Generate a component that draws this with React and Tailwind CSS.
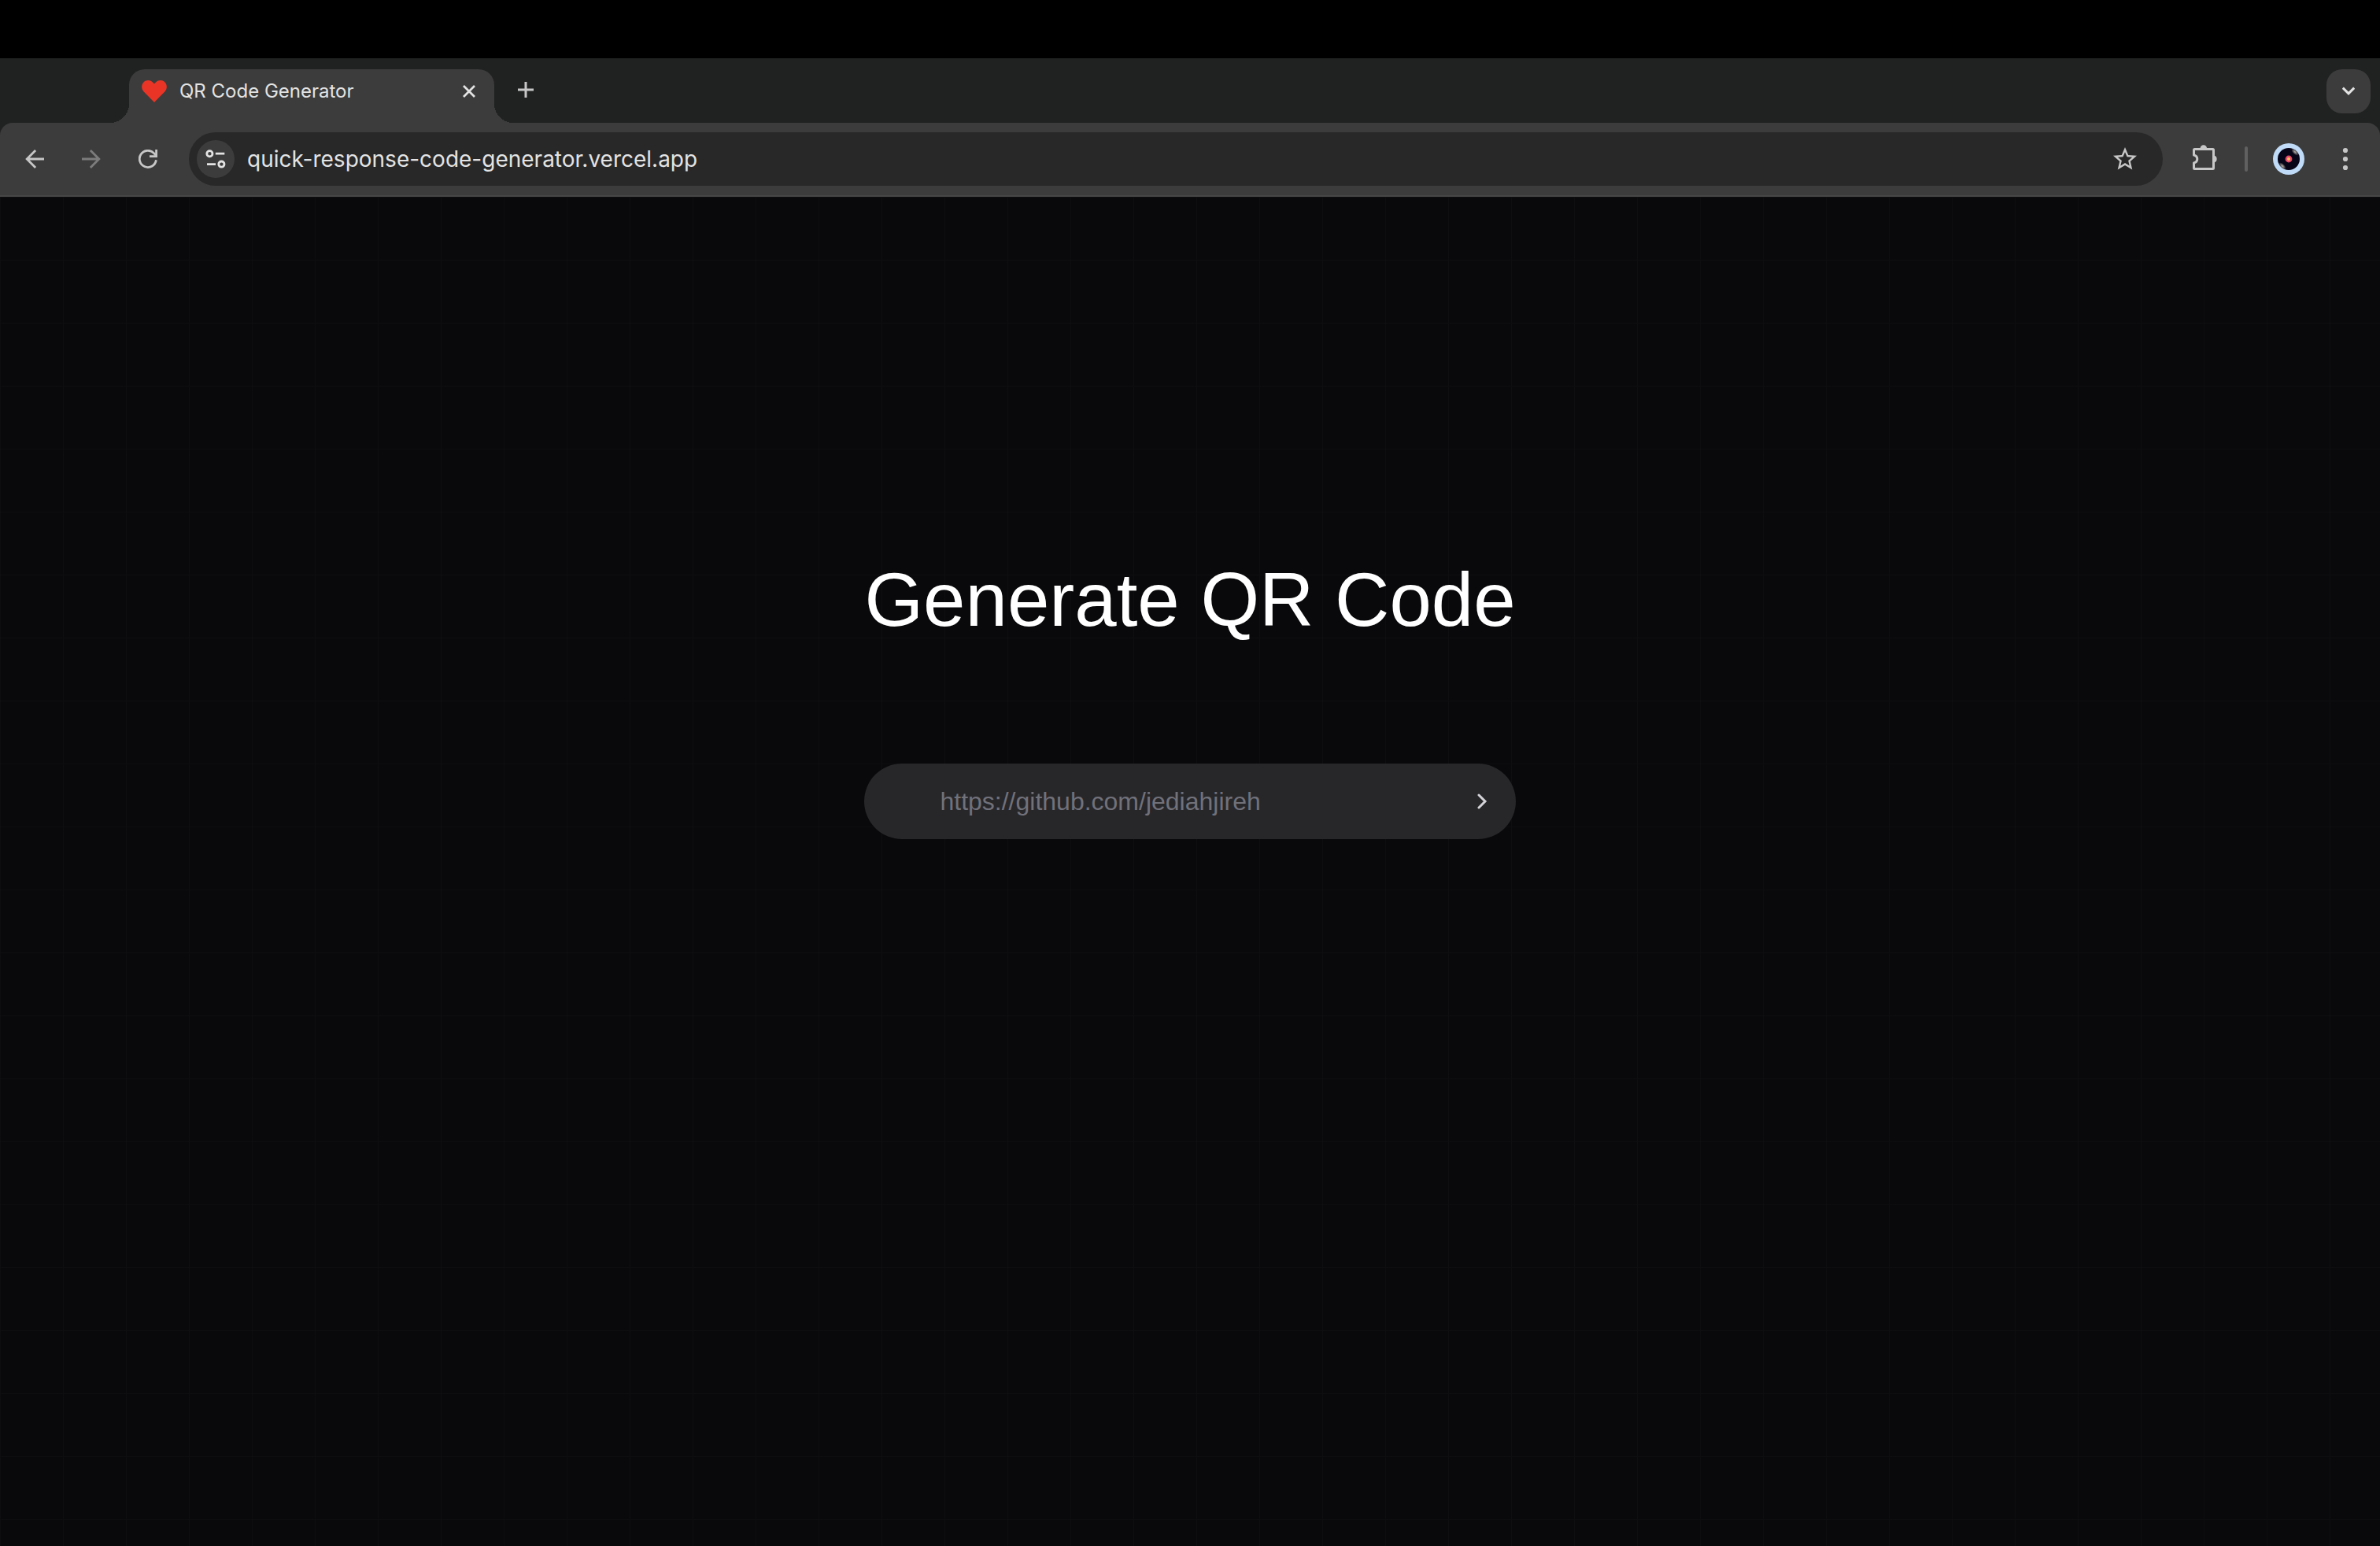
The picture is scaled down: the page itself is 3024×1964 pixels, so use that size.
const iconButton =
  "flex size-14 shrink-0 items-center justify-center rounded-full text-[#c7c7c7]";

function BackIcon() {
  return (
    <svg className="size-6" viewBox="0 0 24 24" fill="none" stroke="currentColor" strokeWidth="2.8">
      <path d="M13.1 1.1 2.2 12l10.9 10.9M2.2 12H24" />
    </svg>
  );
}

function ForwardIcon() {
  return (
    <svg className="size-6" viewBox="0 0 24 24" fill="none" stroke="currentColor" strokeWidth="2.8">
      <path d="M10.9 1.1 21.8 12 10.9 22.9M21.8 12H0" />
    </svg>
  );
}

function ReloadIcon() {
  return (
    <svg className="size-6" viewBox="0 0 24 24" fill="none" stroke="currentColor" strokeWidth="2.8">
      <path d="M22.4 13.3A10.6 10.6 0 1 1 19.6 4.6L22 7.4" />
      <path d="M22.6 0v8.6H14" />
    </svg>
  );
}

function SiteSettingsIcon() {
  return (
    <svg className="size-7" viewBox="0 0 28 28" fill="none" stroke="#e3e3e3" strokeWidth="2.8">
      <circle cx="6.4" cy="7.2" r="3.6" />
      <path d="M13.8 7.2h11.5M3 20.6h11" />
      <circle cx="21.4" cy="20.6" r="3.6" />
    </svg>
  );
}

function StarIcon() {
  return (
    <svg className="size-9" viewBox="0 0 24 24" fill="currentColor">
      <path d="M22 9.24l-7.19-.62L12 2 9.19 8.63 2 9.24l5.46 4.73L5.82 21 12 17.27 18.18 21l-1.63-7.03L22 9.24zM12 15.4l-3.76 2.27 1-4.28-3.32-2.88 4.38-.38L12 6.1l1.71 4.04 4.38.38-3.32 2.88 1 4.28L12 15.4z" />
    </svg>
  );
}

function ExtensionsIcon() {
  return (
    <svg className="size-9" viewBox="0 0 36 36" fill="none" stroke="currentColor" strokeWidth="3">
      <path d="M3.5 13V6.5q0-1 1-1h23q1 0 1 1v23q0 1-1 1h-23q-1 0-1-1V23C9.2 21.6 9.2 14.4 3.5 13z" strokeLinejoin="round" />
      <path d="M11.5 4.5a4.3 4.3 0 0 1 8.6 0zM29 13.500a4.600 4.600 0 0 1 0 9z" fill="currentColor" stroke="none" />
    </svg>
  );
}

function AvatarIcon() {
  return (
    <svg className="size-10" viewBox="0 0 40 40">
      <defs>
        <radialGradient id="shine">
          <stop offset="0" stopColor="#b9b4a8" />
          <stop offset="1" stopColor="#b9b4a8" stopOpacity="0" />
        </radialGradient>
        <clipPath id="disc">
          <circle cx="20" cy="20" r="14" />
        </clipPath>
      </defs>
      <circle cx="20" cy="20" r="20" fill="#bfdbf7" />
      <circle cx="20" cy="20" r="14" fill="#070417" />
      <g clipPath="url(#disc)">
        <ellipse cx="28" cy="11" rx="6" ry="3" fill="url(#shine)" transform="rotate(45 28 11)" />
        <ellipse cx="12" cy="29" rx="6" ry="3" fill="url(#shine)" transform="rotate(45 12 29)" />
      </g>
      <circle cx="20" cy="20" r="4.4" fill="#e8476a" />
      <circle cx="20" cy="20" r="2" fill="#f7c65b" />
    </svg>
  );
}

function MenuIcon() {
  return (
    <svg className="size-8" viewBox="0 0 32 32" fill="currentColor">
      <circle cx="16" cy="5" r="3.1" />
      <circle cx="16" cy="16" r="3.1" />
      <circle cx="16" cy="27" r="3.1" />
    </svg>
  );
}

function TabStrip() {
  return (
    <div className="flex items-end pl-35 pr-3">
      <span className="size-6 bg-[radial-gradient(circle_at_0_0,transparent_24px,#3c3c3c_24px)]" />
      <div className="mt-3.5 flex h-17 w-116 items-center rounded-t-[20px] bg-[#3c3c3c] pb-3 pl-4 pr-3">
        <svg className="h-7 w-8" viewBox="0 0 32 28" fill="#ea3526">
          <path d="M16 28 2.500 14.200C-.6 10.900-.6 5.600 2.500 2.500c3.200-3.200 8.100-3.200 11.200-.2L16 4.500l2.300-2.200c3.100-3 8-3 11.200.2 3.100 3.100 3.100 8.400 0 11.700z" />
        </svg>
        <span className="ml-4 flex-1 text-2xl text-[#e3e3e3]">QR Code Generator</span>
        <button type="button" aria-label="Close tab" className="flex size-10 items-center justify-center">
          <svg className="size-4" viewBox="0 0 16 16" stroke="#e3e3e3" strokeWidth="2.8">
            <path d="M1 1l14 14M15 1 1 15" />
          </svg>
        </button>
      </div>
      <span className="size-6 bg-[radial-gradient(circle_at_100%_0,transparent_24px,#3c3c3c_24px)]" />
      <button
        type="button"
        aria-label="New tab"
        className="mb-3.5 -ml-3 flex size-14 items-center justify-center"
      >
        <svg className="size-5" viewBox="0 0 20 20" stroke="#c7c7c7" strokeWidth="3">
          <path d="M10 0v20M0 10h20" />
        </svg>
      </button>
      <button
        type="button"
        aria-label="Search tabs"
        className="mb-3 ml-auto flex size-14 items-center justify-center rounded-[20px] bg-[#3c3c3c]"
      >
        <svg className="size-4" viewBox="0 0 16 16" fill="none" stroke="#e3e3e3" strokeWidth="3">
          <path d="M.8 3.6 8 10.8l7.2-7.2" />
        </svg>
      </button>
    </div>
  );
}

function Toolbar() {
  return (
    <div className="flex h-23.5 items-center gap-4 rounded-t-2xl border-b-2 border-[#474747] bg-[#3c3c3c] px-4">
      <button type="button" aria-label="Back" className={iconButton}>
        <BackIcon />
      </button>
      <button type="button" aria-label="Forward" className={iconButton} disabled>
        <span className="text-[#7c7c7c]">
          <ForwardIcon />
        </span>
      </button>
      <button type="button" aria-label="Reload" className={iconButton}>
        <ReloadIcon />
      </button>
      <div className="ml-2 mr-2.5 flex h-17 min-w-0 flex-1 items-center rounded-full bg-[#282828] pl-2.5 pr-5">
        <button
          type="button"
          aria-label="View site information"
          className="flex size-12 shrink-0 items-center justify-center rounded-full bg-[#3c3c3c]"
        >
          <SiteSettingsIcon />
        </button>
        <input
          type="text"
          aria-label="Address"
          defaultValue="quick-response-code-generator.vercel.app"
          className="ml-4 min-w-0 flex-1 bg-transparent text-[28px] leading-9 text-[#e3e3e3] outline-none"
        />
        <button type="button" aria-label="Bookmark this tab" className={iconButton}>
          <StarIcon />
        </button>
      </div>
      <button type="button" aria-label="Extensions" className={iconButton}>
        <ExtensionsIcon />
      </button>
      <span className="ml-1.5 mr-2 h-8 w-1 rounded-full bg-[#606060]" />
      <button type="button" aria-label="Profile" className={iconButton}>
        <AvatarIcon />
      </button>
      <button type="button" aria-label="Menu" className={iconButton}>
        <MenuIcon />
      </button>
    </div>
  );
}

function GeneratorPage() {
  return (
    <main className="flex flex-1 flex-col items-center bg-[#09090b] bg-[linear-gradient(to_right,#0e0e10_1px,transparent_1px),linear-gradient(to_bottom,#0e0e10_1px,transparent_1px)] bg-size-[80px_80px] pt-116 font-['Liberation_Sans',Arial,sans-serif]">
      <div className="flex w-fit flex-col gap-40">
        <h1 className="text-8xl leading-none text-white">Generate QR Code</h1>
        <form className="flex h-24 items-center rounded-full bg-[#27272a] pl-24 pr-4">
          <input
            type="text"
            aria-label="Link"
            placeholder="https://github.com/jediahjireh"
            className="min-w-0 flex-1 bg-transparent text-[32px] leading-10 text-white outline-none placeholder:text-[#71717a]"
          />
          <button type="button" aria-label="Generate" className="flex size-14 items-center justify-center">
            <svg className="size-6" viewBox="0 0 24 24" fill="none" stroke="#d4d4d8" strokeWidth="3" strokeLinecap="round">
              <path d="M9 4l8 8-8 8" />
            </svg>
          </button>
        </form>
      </div>
    </main>
  );
}

export default function App() {
  return (
    <div className="flex min-h-screen flex-col bg-black font-['Inter',sans-serif]">
      <div className="h-18.5 bg-black" />
      <header className="bg-[#202221]">
        <TabStrip />
        <Toolbar />
      </header>
      <GeneratorPage />
    </div>
  );
}
